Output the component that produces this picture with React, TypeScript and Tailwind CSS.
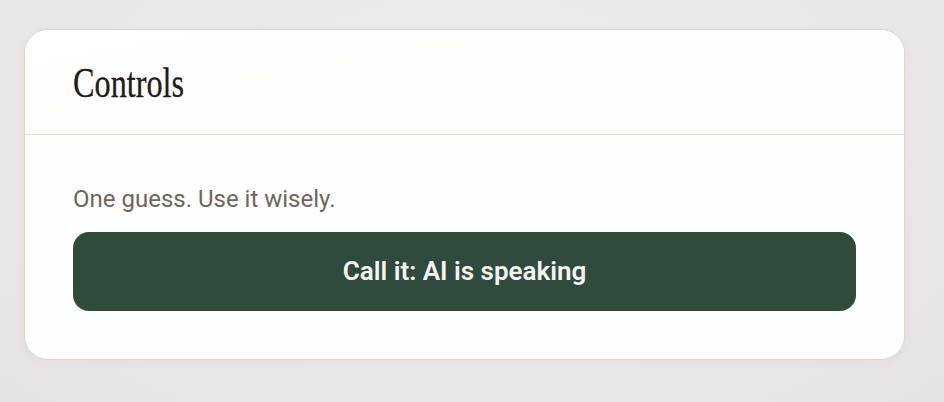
export default function App() {
  return (
    <div className="min-h-screen w-full bg-[radial-gradient(ellipse_at_50%_30%,#efeeec,#e6e4e2)] pt-[29px] pl-6">
      <section className="w-[881px] overflow-hidden rounded-[24px] border border-[#ddd6cf] bg-[#fefefe] shadow-[0_2px_10px_rgba(60,50,40,0.04)]">
        <header className="flex h-[105px] items-center border-b border-[#e4dfda] bg-[linear-gradient(170deg,#ffffff,#fdfdfb)] px-12">
          <h2 className="inline-block origin-left scale-x-[0.75] font-['Liberation_Serif',serif] text-[43px] leading-none whitespace-nowrap text-[#1f1c1b] [-webkit-text-stroke:0.3px_#1f1c1b]">
            Controls
          </h2>
        </header>
        <div className="px-12 pt-12 pb-12">
          <p className="font-['Roboto',sans-serif] text-[24px] leading-[32px] text-[#6e655d]">
            One guess. Use it wisely.
          </p>
          <button className="mt-[17px] flex h-[79px] w-full items-center justify-center rounded-[16px] bg-[#2e4b3e] font-['Roboto',sans-serif] text-[26px] font-semibold text-[#f7f5f1]">
            Call it: AI is speaking
          </button>
        </div>
      </section>
    </div>
  );
}
